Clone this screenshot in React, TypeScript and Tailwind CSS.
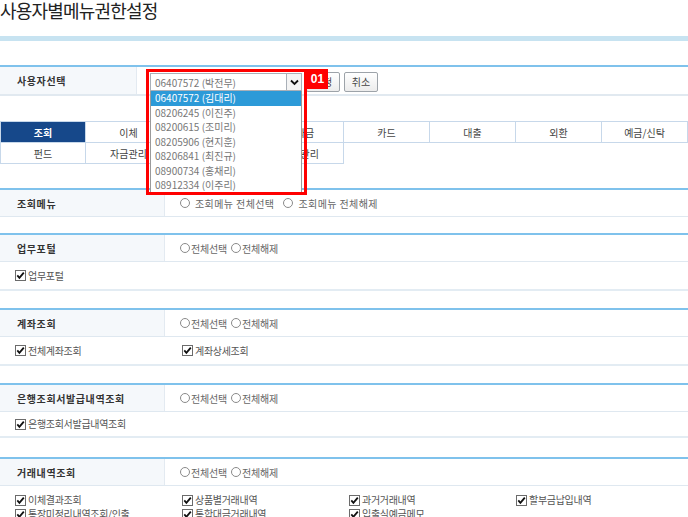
import React from 'react'

const font = "font-['Noto_Sans_CJK_KR','Noto_Sans',sans-serif]"

const users = [
  '06407572 (김대리)',
  '08206245 (이진주)',
  '08200615 (조미리)',
  '08205906 (현지훈)',
  '08206841 (최진규)',
  '08900734 (홍채리)',
  '08912334 (이주리)',
]

const tabsTop = ['조회', '이체', '급여', '공과금', '카드', '대출', '외환', '예금/신탁']
const tabsBottom = ['펀드', '자금관리', '전자어음', '기업관리']

function Checkbox({ label }: { label: string }) {
  return (
    <div className="flex items-center gap-[2px] text-[10px] text-[#555] tracking-[-0.3px] leading-[14px]">
      <svg width="11" height="11" viewBox="0 0 11 11" className="shrink-0">
        <rect x="0.5" y="0.5" width="10" height="10" fill="#fff" stroke="#6b6b6b" />
        <path d="M2.3 5.4 L4.4 7.8 L8.8 2.6" fill="none" stroke="#111" strokeWidth="1.8" />
      </svg>
      <span>{label}</span>
    </div>
  )
}

function Radio({ label, spaced }: { label: string; spaced?: boolean }) {
  return (
    <div className={`flex items-center ${spaced ? 'gap-[5px]' : 'gap-[1px]'} text-[10px] text-[#666]`}>
      <span className="w-[10px] h-[10px] rounded-full border border-[#8a8a8a] bg-white" />
      <span className={spaced ? 'tracking-[0.4px]' : 'tracking-[-0.2px]'}>{label}</span>
    </div>
  )
}

function SectionHead({ title, spaced }: { title: string; spaced?: boolean }) {
  return (
    <div className="flex h-[27px] border-b border-[#dfe8f0]">
      <div className="w-[165px] shrink-0 bg-[#f5f8fb] border-r border-[#e3eaf1] flex items-center pl-[17px] text-[10px] font-bold text-[#333] tracking-[0.6px]">
        {title}
      </div>
      <div className={`flex items-center pl-[15px] ${spaced ? 'gap-[9px]' : 'gap-[4px]'}`}>
        {spaced ? (
          <>
            <Radio spaced label="조회메뉴 전체선택" />
            <Radio spaced label="조회메뉴 전체해제" />
          </>
        ) : (
          <>
            <Radio label="전체선택" />
            <Radio label="전체해제" />
          </>
        )}
      </div>
    </div>
  )
}

function CheckRow({ items, h }: { items: string[]; h: string }) {
  return (
    <div className={`${h} border-b-2 border-[#e3ecf3] px-[15px] grid grid-cols-[repeat(4,167px)] content-center`}>
      {items.map(i => (
        <Checkbox key={i} label={i} />
      ))}
    </div>
  )
}

export default function App() {
  return (
    <div className={`w-[688px] h-[517px] overflow-hidden bg-white ${font}`}>
      {/* title */}
      <h1 className="text-[18px] leading-[20px] tracking-[-0.8px] text-[#222] h-[22px]">사용자별메뉴권한설정</h1>
      <div className="mt-[14px] h-[5px] bg-[#c7e3f1]" />

      {/* user select */}
      <div className="mt-[24px] border-t-2 border-[#7fc2ec]">
        <div className="flex h-[29px] border-b-2 border-[#e1e9f0]">
          <div className="w-[137px] shrink-0 bg-[#f5f8fb] border-r border-[#e3eaf1] flex items-center pl-[17px] text-[10px] font-bold text-[#333] tracking-[0.6px]">
            사용자선택
          </div>
          <div className="flex items-center pl-[13px] gap-[4px]">
            <div className="relative w-[152px] h-[18px] mt-[3px]">
              <div className="h-full border border-[#a9b0b8] bg-white flex items-center justify-between pl-[4px] text-[10px] text-[#777]">
                <span>06407572 (박전무)</span>
                <span className="w-[15px] h-[16px] border-l border-[#a9b0b8] bg-[#f4f4f4] flex items-center justify-center">
                  <svg width="9" height="7" viewBox="0 0 9 7">
                    <path d="M1 1.5 L4.5 5 L8 1.5" fill="none" stroke="#111" strokeWidth="1.8" />
                  </svg>
                </span>
              </div>
              {/* opened list */}
              <div className="absolute top-full left-0 w-full bg-white border-x border-b border-[#9a9a9a] z-10">
                {users.map((u, i) => (
                  <div
                    key={u}
                    className={`h-[14.5px] leading-[14.5px] pl-[4px] text-[10px] ${
                      i === 0 ? 'bg-[#2c9ad8] text-white' : 'text-[#777]'
                    }`}
                  >
                    {u}
                  </div>
                ))}
              </div>
              {/* highlight frame */}
              <div className="absolute -left-[4px] -top-[4px] w-[161px] h-[126px] border-[3px] border-[#ff0000] z-20" />
              <div className="absolute left-[157px] -top-[4px] w-[21px] h-[20px] bg-[#ff0000] z-20 flex items-center justify-center text-white text-[12px] font-bold font-['Liberation_Sans',sans-serif]">
                01
              </div>
            </div>
            <button className="w-[34px] h-[20px] border border-[#9da3a9] rounded-[2px] bg-gradient-to-b from-white to-[#ececec] text-[10px] text-[#444] mt-[2px]">
              설정
            </button>
            <button className="w-[34px] h-[20px] border border-[#9da3a9] rounded-[2px] bg-gradient-to-b from-white to-[#ececec] text-[10px] text-[#444] mt-[2px]">
              취소
            </button>
          </div>
        </div>
      </div>

      {/* tabs */}
      <div className="mt-[25px] grid grid-cols-8 text-[10px] text-[#444]">
        {tabsTop.map((t, i) => (
          <div
            key={t}
            className={`h-[22px] border-t border-b border-r border-[#c7d8ea] flex items-center justify-center ${
              i === 0 ? 'border-l bg-[#16488a] text-white font-bold' : ''
            }`}
          >
            {t}
          </div>
        ))}
        {tabsBottom.map((t, i) => (
          <div
            key={t}
            className={`h-[21px] border-b border-r border-[#c7d8ea] flex items-center justify-center ${i === 0 ? 'border-l' : ''}`}
          >
            {t}
          </div>
        ))}
      </div>

      {/* 조회메뉴 */}
      <div className="mt-[24px] border-t-2 border-[#7fc2ec]">
        <SectionHead spaced title="조회메뉴" />
      </div>

      {/* 업무포털 */}
      <div className="mt-[16px] border-t-2 border-[#7fc2ec]">
        <SectionHead title="업무포털" />
        <CheckRow h="h-[29px]" items={['업무포털']} />
      </div>

      {/* 계좌조회 */}
      <div className="mt-[17px] border-t-2 border-[#7fc2ec]">
        <SectionHead title="계좌조회" />
        <CheckRow h="h-[29px]" items={['전체계좌조회', '계좌상세조회']} />
      </div>

      {/* 은행조회서발급내역조회 */}
      <div className="mt-[17px] border-t-2 border-[#7fc2ec]">
        <SectionHead title="은행조회서발급내역조회" />
        <CheckRow h="h-[26px]" items={['은행조회서발급내역조회']} />
      </div>

      {/* 거래내역조회 */}
      <div className="mt-[19px] border-t-2 border-[#7fc2ec]">
        <SectionHead title="거래내역조회" />
        <div className="px-[15px] pt-[7px] grid grid-cols-[repeat(4,167px)]">
          {[
            '이체결과조회',
            '상품별거래내역',
            '과거거래내역',
            '할부금납입내역',
            '통장미정리내역조회/인출',
            '통합대금거래내역',
            '입출식예금메모',
          ].map(i => (
            <Checkbox key={i} label={i} />
          ))}
        </div>
      </div>
    </div>
  )
}
